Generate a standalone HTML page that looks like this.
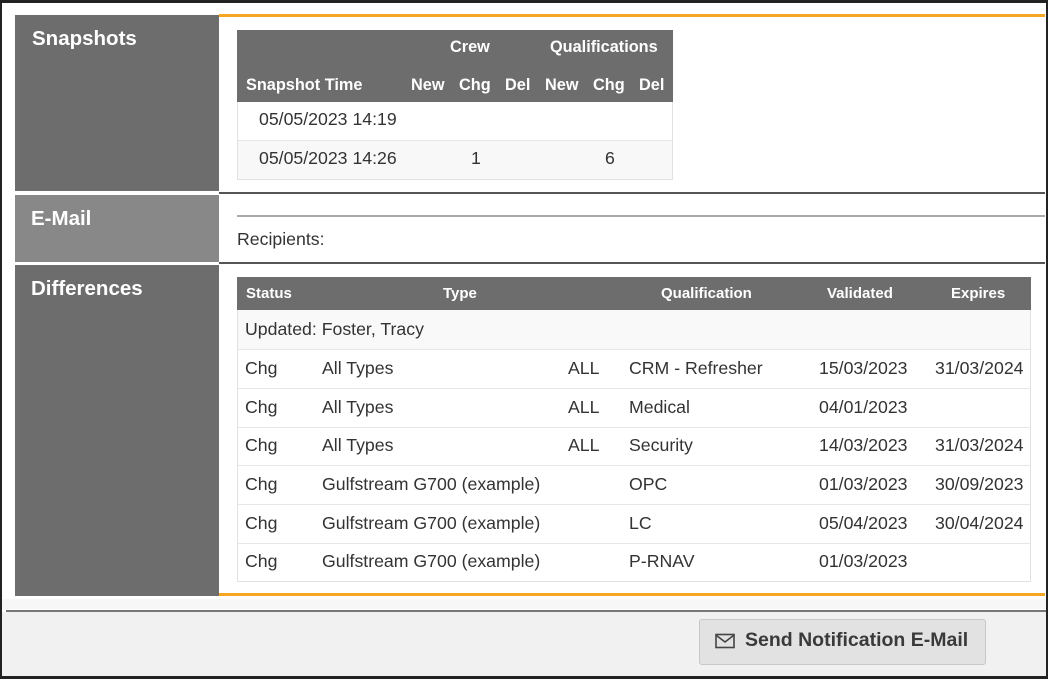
<!DOCTYPE html>
<html><head><style>
*{margin:0;padding:0;box-sizing:border-box}
body{width:1048px;height:679px;position:relative;overflow:hidden;background:#fff;font-family:"Liberation Sans",Arial,sans-serif;color:#333}
.a{position:absolute}
.lbl{color:#fff;font-weight:bold;font-size:20.5px}
.hd{color:#fff;font-weight:bold;font-size:16.3px;position:absolute;white-space:nowrap}
.hd2{color:#fff;font-weight:bold;font-size:15px;position:absolute;white-space:nowrap}
.t{position:absolute;font-size:17.7px;white-space:nowrap}
</style></head><body>
<div class="a" style="left:0;top:0;width:1048px;height:679px;border:2px solid #222;border-top-width:3px;border-bottom-width:3px"></div>

<div class="a" style="left:15px;top:15px;width:204px;height:176px;background:#6d6d6d"></div>
<div class="a lbl" style="left:32px;top:27px">Snapshots</div>
<div class="a" style="left:15px;top:195px;width:204px;height:67px;background:#888"></div>
<div class="a lbl" style="left:31px;top:207px">E-Mail</div>
<div class="a" style="left:15px;top:265px;width:204px;height:331px;background:#6d6d6d"></div>
<div class="a lbl" style="left:31px;top:277px">Differences</div>

<div class="a" style="left:219px;top:14px;width:826px;height:3px;background:#f5a623"></div>
<div class="a" style="left:219px;top:192px;width:826px;height:2px;background:#555"></div>
<div class="a" style="left:237px;top:215px;width:808px;height:2px;background:#aaa"></div>
<div class="a" style="left:219px;top:262px;width:826px;height:2px;background:#555"></div>
<div class="a" style="left:219px;top:593px;width:826px;height:3px;background:#f5a623"></div>

<div class="a" style="left:237px;top:30px;width:436px;height:150px;border:1px solid #e2e2e2;background:#fff"></div>
<div class="a" style="left:237px;top:30px;width:436px;height:72px;background:#6d6d6d"></div>
<div class="hd" style="left:450px;top:38px">Crew</div>
<div class="hd" style="left:550px;top:38px">Qualifications</div>
<div class="hd" style="left:246px;top:76px">Snapshot Time</div>
<div class="hd" style="left:411px;top:76px">New</div>
<div class="hd" style="left:459px;top:76px">Chg</div>
<div class="hd" style="left:505px;top:76px">Del</div>
<div class="hd" style="left:545px;top:76px">New</div>
<div class="hd" style="left:593px;top:76px">Chg</div>
<div class="hd" style="left:639px;top:76px">Del</div>
<div class="a" style="left:238px;top:140px;width:434px;height:39px;background:#f8f8f8;border-top:1px solid #e6e6e6"></div>
<div class="t" style="left:259px;top:109px">05/05/2023 14:19</div>
<div class="t" style="left:259px;top:148px">05/05/2023 14:26</div>
<div class="t" style="left:471px;top:148px">1</div>
<div class="t" style="left:605px;top:148px">6</div>

<div class="t" style="left:237px;top:229px">Recipients:</div>

<div class="a" style="left:237px;top:277px;width:794px;height:305px;border:1px solid #e2e2e2;background:#fff"></div>
<div class="a" style="left:237px;top:277px;width:794px;height:33px;background:#6d6d6d"></div>
<div class="hd2" style="left:246px;top:285px">Status</div>
<div class="hd2" style="left:443px;top:285px">Type</div>
<div class="hd2" style="left:661px;top:285px">Qualification</div>
<div class="hd2" style="left:827px;top:285px">Validated</div>
<div class="hd2" style="left:951px;top:285px">Expires</div>
<div class="a" style="left:238px;top:310px;width:792px;height:39px;background:#f9f9f9"></div>
<div class="t" style="left:245px;top:319px">Updated: Foster, Tracy</div>
<div class="a" style="left:238px;top:349px;width:792px;height:1px;background:#e6e6e6"></div>
<div class="a" style="left:238px;top:388px;width:792px;height:1px;background:#e6e6e6"></div>
<div class="a" style="left:238px;top:427px;width:792px;height:1px;background:#e6e6e6"></div>
<div class="a" style="left:238px;top:465px;width:792px;height:1px;background:#e6e6e6"></div>
<div class="a" style="left:238px;top:504px;width:792px;height:1px;background:#e6e6e6"></div>
<div class="a" style="left:238px;top:543px;width:792px;height:1px;background:#e6e6e6"></div>

<div class="t" style="left:245px;top:358px">Chg</div><div class="t" style="left:322px;top:358px">All Types</div><div class="t" style="left:568px;top:358px">ALL</div><div class="t" style="left:629px;top:358px">CRM - Refresher</div><div class="t" style="left:819px;top:358px">15/03/2023</div><div class="t" style="left:935px;top:358px">31/03/2024</div>
<div class="t" style="left:245px;top:397px">Chg</div><div class="t" style="left:322px;top:397px">All Types</div><div class="t" style="left:568px;top:397px">ALL</div><div class="t" style="left:629px;top:397px">Medical</div><div class="t" style="left:819px;top:397px">04/01/2023</div>
<div class="t" style="left:245px;top:435px">Chg</div><div class="t" style="left:322px;top:435px">All Types</div><div class="t" style="left:568px;top:435px">ALL</div><div class="t" style="left:629px;top:435px">Security</div><div class="t" style="left:819px;top:435px">14/03/2023</div><div class="t" style="left:935px;top:435px">31/03/2024</div>
<div class="t" style="left:245px;top:474px">Chg</div><div class="t" style="left:322px;top:474px">Gulfstream G700 (example)</div><div class="t" style="left:629px;top:474px">OPC</div><div class="t" style="left:819px;top:474px">01/03/2023</div><div class="t" style="left:935px;top:474px">30/09/2023</div>
<div class="t" style="left:245px;top:513px">Chg</div><div class="t" style="left:322px;top:513px">Gulfstream G700 (example)</div><div class="t" style="left:629px;top:513px">LC</div><div class="t" style="left:819px;top:513px">05/04/2023</div><div class="t" style="left:935px;top:513px">30/04/2024</div>
<div class="t" style="left:245px;top:551px">Chg</div><div class="t" style="left:322px;top:551px">Gulfstream G700 (example)</div><div class="t" style="left:629px;top:551px">P-RNAV</div><div class="t" style="left:819px;top:551px">01/03/2023</div>

<div class="a" style="left:2px;top:599px;width:1044px;height:10px;background:#f7f7f7"></div>
<div class="a" style="left:6px;top:610px;width:1040px;height:2px;background:#777"></div>
<div class="a" style="left:2px;top:612px;width:1044px;height:64px;background:#f1f1f1"></div>
<div class="a" style="left:699px;top:619px;width:287px;height:46px;background:#e2e2e2;border:1px solid #c8c8c8;border-radius:3px"></div>
<svg class="a" style="left:715px;top:633px" width="21" height="16" viewBox="0 0 21 16"><rect x="1" y="1.5" width="18" height="13" fill="none" stroke="#444" stroke-width="1.6"/><path d="M1.5 2.5 L10 9 L18.5 2.5" fill="none" stroke="#444" stroke-width="1.6"/></svg>
<div class="t" style="left:745px;top:629px;font-size:19.5px;font-weight:bold;color:#3a3a3a">Send Notification E-Mail</div>
</body></html>
